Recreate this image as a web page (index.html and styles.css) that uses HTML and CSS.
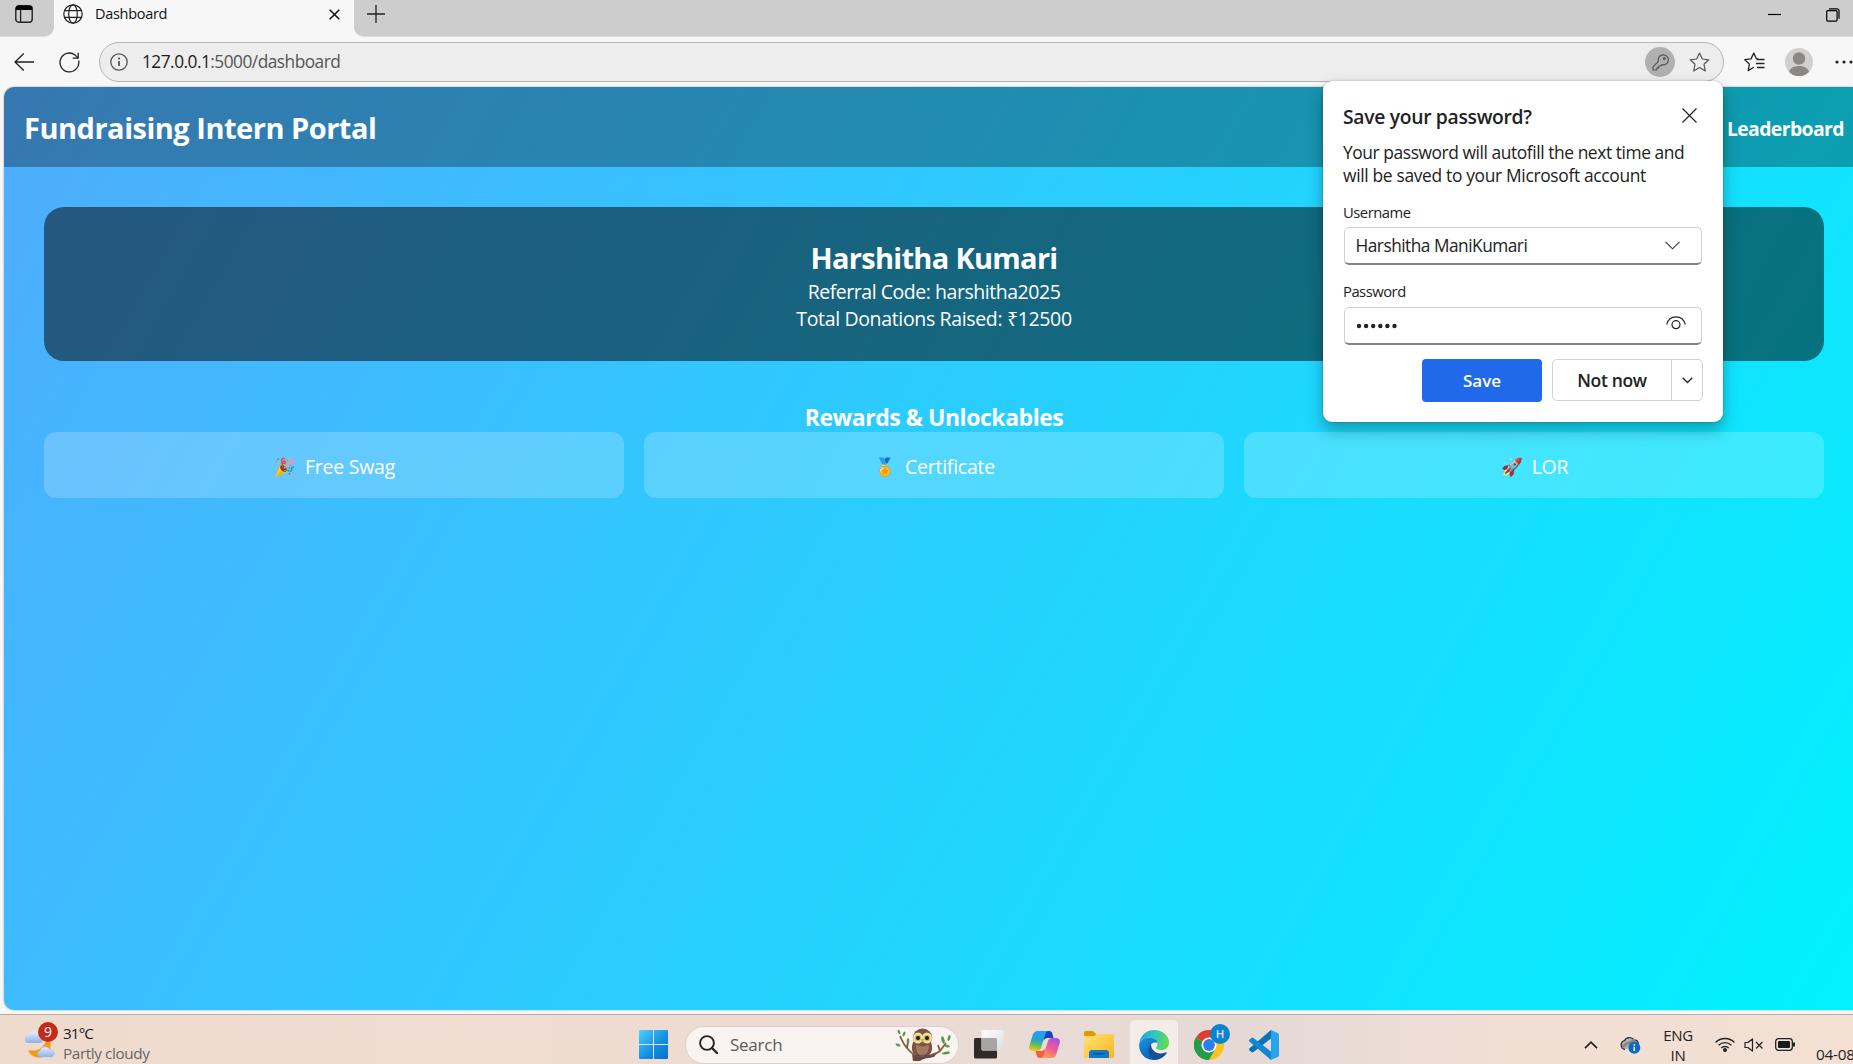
FILE: index.html
```html
<!DOCTYPE html>
<html lang="en">
<head>
<meta charset="utf-8">
<title>Dashboard</title>
<link rel="stylesheet" href="styles.css">
</head>
<body>
<div class="tabstrip">
  <div class="strip-left">
    <svg width="18" height="18" viewBox="0 0 18 18"><rect x=".8" y=".8" width="16.4" height="16.4" rx="3" fill="none" stroke="#222" stroke-width="1.4"/><path d="M.8 5V3.5A2.8 2.8 0 0 1 3.6.7h10.8a2.8 2.8 0 0 1 2.8 2.8V5z" fill="#000"/><path d="M5.6 5v12" stroke="#222" stroke-width="1.3"/></svg>
  </div>
  <div class="tab">
    <svg class="globe" width="20" height="20" viewBox="0 0 20 20" fill="none" stroke="#222" stroke-width="1.2"><circle cx="10" cy="10" r="9.2"/><ellipse cx="10" cy="10" rx="4.3" ry="9.2"/><path d="M1.6 6.6h16.8M1.6 13.4h16.8"/></svg>
    <span class="tab-title">Dashboard</span>
    <svg class="tab-close" width="11" height="11" viewBox="0 0 11 11" stroke="#111" stroke-width="1.5"><path d="M.7.7l9.6 9.6M10.3.7L.7 10.3"/></svg>
  </div>
  <div class="strip-right">
    <svg class="new-tab" width="18" height="18" viewBox="0 0 18 18" stroke="#222" stroke-width="1.3"><path d="M9 0v18M0 9h18"/></svg>
    <svg class="minimize" width="13" height="13" viewBox="0 0 13 13"><path d="M0 6.5h13" stroke="#000" stroke-width="1.2"/></svg>
    <svg class="restore" width="14" height="14" viewBox="0 0 14 14" fill="none" stroke="#000" stroke-width="1.2"><rect x=".7" y="2.7" width="10.4" height="10.4" rx="1"/><path d="M3 .8h8a2 2 0 0 1 2 2v8"/></svg>
  </div>
</div>

<div class="toolbar">
  <svg class="back" width="20" height="18" viewBox="0 0 20 18" fill="none" stroke="#222" stroke-width="1.3"><path d="M20 9H1M9.8.5L1 9l8.8 8.5"/></svg>
  <svg class="reload" width="21" height="21" viewBox="0 0 21 21" fill="none" stroke="#222" stroke-width="1.3"><path d="M19.6 8.5A9.4 9.4 0 1 1 16 2.9L19 6"/><path d="M19.2.8v5.4h-5.5"/></svg>
  <div class="address">
    <svg class="info" width="18" height="18" viewBox="0 0 18 18"><circle cx="9" cy="9" r="8.2" fill="none" stroke="#555" stroke-width="1.3"/><path d="M9 8v5" stroke="#444" stroke-width="1.6"/><circle cx="9" cy="5.6" r="1" fill="#444"/></svg>
    <span class="url"><b>127.0.0.1</b>:5000/dashboard</span>
    <span class="key"><svg width="17" height="17" viewBox="0 0 17 17" fill="none" stroke="#555" stroke-width="1.2"><path d="M11.2.8a5 5 0 1 1-1.3 9.800L8.500 12H6.800v1.800H5v1.400L4.200 16H1v-3.100l5.500-5.600A5 5 0 0 1 11.200.8z" stroke-linejoin="round"/><circle cx="12.300" cy="4.600" r=".9"/></svg></span>
    <svg class="star" width="21" height="20" viewBox="0 0 21 20" fill="none" stroke="#555" stroke-width="1.2" stroke-linejoin="round"><path d="M10.500 1l2.800 6 6.500.8-4.800 4.500 1.300 6.600-5.800-3.300-5.800 3.300L6 12.300 1.200 7.800 7.700 7z"/></svg>
  </div>
  <svg class="favs" width="21" height="20" viewBox="0 0 21 20" fill="none" stroke="#222" stroke-width="1.300" stroke-linejoin="round"><path d="M14 7l-1.600-.2L9.800 1 7 6.900.8 7.700l4.600 4.400-1.200 6.500 5.600-3.300"/><path d="M13 7.500h7.500M12 11.500h8.500M13 15.500h7.500"/></svg>
  <svg class="avatar" width="28" height="28" viewBox="0 0 28 28"><circle cx="14" cy="14" r="14" fill="#d2d0ce"/><circle cx="14" cy="10.500" r="6.200" fill="#8a8886"/><path d="M4 24c1-4 5-6 10-6s9 2 10 6a14 14 0 0 1-20 0z" fill="#8a8886"/></svg>
  <svg class="more" width="18" height="4" viewBox="0 0 18 4" fill="#222"><circle cx="2" cy="2" r="1.600"/><circle cx="9" cy="2" r="1.600"/><circle cx="16" cy="2" r="1.600"/></svg>
</div>

<div class="viewport">
  <div class="page">
    <header class="navbar">
      <h1>Fundraising Intern Portal</h1>
      <a class="nav-link">Leaderboard</a>
    </header>
    <main>
      <section class="profile">
        <h2>Harshitha Kumari</h2>
        <p class="referral">Referral Code: harshitha2025</p>
        <p class="total">Total Donations Raised: ₹12500</p>
      </section>
      <h3>Rewards &amp; Unlockables</h3>
      <div class="rewards">
        <div class="reward"><span class="emoji">🎉</span>Free Swag</div>
        <div class="reward"><span class="emoji">🏅</span>Certificate</div>
        <div class="reward"><span class="emoji">🚀</span>LOR</div>
      </div>
    </main>
  </div>
</div>

<div class="taskbar">
  <div class="weather">
    <div class="weather-icon">
      <svg width="32" height="34" viewBox="0 0 32 34"><defs><linearGradient id="cl" x1="0" y1="0" x2="0" y2="1"><stop offset="0" stop-color="#e6efff"/><stop offset="1" stop-color="#8eb0ea"/></linearGradient></defs><path d="M26 16c2 6 0 14-7 16-6 2-13-1-15-7 8 2 15-1 18-9z" fill="#f39a1b"/><path d="M4 18a3.800 3.800 0 0 1 0-7.500 6 6 0 0 1 11-1c5 0 6 8 1 8.500z" fill="url(#cl)"/><path d="M16 32a3.500 3.500 0 0 1 0-6.500 5.500 5.500 0 0 1 10-1c5 0 6 7 1 7.500z" fill="url(#cl)" stroke="#9dbaf0" stroke-width=".5"/></svg>
      <span class="count">9</span>
    </div>
    <div class="weather-text"><div class="temp">31°C</div><div class="cond">Partly cloudy</div></div>
  </div>
  <svg class="start" width="29" height="29" viewBox="0 0 29 29"><defs><linearGradient id="w" x1="0" y1="0" x2="1" y2="1"><stop offset="0" stop-color="#4fd0ff"/><stop offset=".55" stop-color="#1492e2"/><stop offset="1" stop-color="#0070d0"/></linearGradient></defs><path d="M1 0h13v14H0V1a1 1 0 0 1 1-1zM15 0h13a1 1 0 0 1 1 1v13H15zM0 15h14v14H1a1 1 0 0 1-1-1zM15 15h14v13a1 1 0 0 1-1 1H15z" fill="url(#w)"/></svg>
  <div class="search">
    <svg class="lens" width="19" height="19" viewBox="0 0 19 19" fill="none" stroke="#222"><circle cx="8" cy="8" r="6.900" stroke-width="1.900"/><path d="M13 13l5 5" stroke-width="2.300" stroke-linecap="round"/></svg>
    <span>Search</span>
    <svg class="owl" width="56" height="33" viewBox="0 0 56 33">
      <path d="M5 8c2 4 3 8 7 12 3 4 7 7 12 9M18 32c8-5 20-3 27-9l6-8M12 20l1-6M45 23l-2-6" fill="none" stroke="#8a5a3c" stroke-width="1.800"/>
      <path d="M17 26c3 3 18 4 25-1l-3 4c-5 1-10 1-14 4h-7z" fill="#704630"/>
      <g fill="#4f9a4c"><ellipse cx="4" cy="4" rx="1.200" ry="2.300" transform="rotate(-30 4 4)"/><ellipse cx="9" cy="6" rx="1.200" ry="2.600" transform="rotate(25 9 6)"/><ellipse cx="3" cy="17" rx="2.600" ry="1.200" transform="rotate(20 3 17)"/><ellipse cx="13" cy="13" rx="1.300" ry="3"/><ellipse cx="54" cy="10" rx="1.300" ry="3" transform="rotate(15 54 10)"/><ellipse cx="48" cy="12" rx="1.500" ry="3.800" transform="rotate(-15 48 12)"/><ellipse cx="52" cy="18" rx="2.800" ry="1.300" transform="rotate(15 52 18)"/><ellipse cx="51" cy="25" rx="4" ry="1.300" transform="rotate(-12 51 25)"/></g>
      <path d="M18 14c-3 8 0 15 9 15s12-7 9-15z" fill="#7b5342"/><path d="M21 17c0 7 2 10 6 10s7-3 7-10z" fill="#a37a60"/>
      <ellipse cx="27.500" cy="9.500" rx="9.700" ry="9" fill="#7a5548"/><ellipse cx="23" cy="10" rx="5" ry="5.500" fill="#f1dca4"/><ellipse cx="32" cy="10" rx="5" ry="5.500" fill="#f1dca4"/><circle cx="23" cy="10" r="3" fill="#d9b327"/><circle cx="32" cy="10" r="3" fill="#d9b327"/><circle cx="23" cy="10" r="2" fill="#172025"/><circle cx="32" cy="10" r="2" fill="#172025"/><path d="M26 11h3l-1.500 4z" fill="#c9a27a"/><path d="M21 28h4M30 28h4" stroke="#4a4590" stroke-width="2"/>
    </svg>
  </div>
  <svg class="taskview" width="30" height="29" viewBox="0 0 30 29"><defs><linearGradient id="tv" x1="0" y1="0" x2="1" y2="1"><stop offset="0" stop-color="#fff"/><stop offset="1" stop-color="#dcdcdc"/></linearGradient></defs><rect x="0" y="8" width="23" height="20.500" rx="1.500" fill="#2d2c2b"/><rect x="7.500" y="0" width="22.500" height="20.500" rx="1.500" fill="url(#tv)"/><path d="M7.500 8H21.500a1.500 1.500 0 0 1 1.500 1.500V20.500H9a1.500 1.500 0 0 1-1.500-1.500z" fill="#a6a5a4"/></svg>
  <svg class="copilot" width="31" height="29" viewBox="0 0 31 29"><defs><linearGradient id="c1" x1=".5" y1="0" x2=".3" y2="1"><stop offset="0" stop-color="#2a9df4"/><stop offset=".45" stop-color="#1ba7c9"/><stop offset=".75" stop-color="#7cc13f"/><stop offset="1" stop-color="#f6c90e"/></linearGradient><linearGradient id="c2" x1=".8" y1="0" x2=".3" y2="1"><stop offset="0" stop-color="#a54fe8"/><stop offset=".5" stop-color="#ef5b92"/><stop offset="1" stop-color="#ff9d5c"/></linearGradient></defs><path d="M15 1h5c2 0 3 1 3.500 3l1 4h-6c-2 0-3 1-4 3z" fill="#1743c4"/><path d="M16 28h-5c-2 0-3-1-3.500-3l-1-4h6c2 0 3-1 4-3z" fill="#f5603c"/><path d="M9 1h11c-2 0-3 1-3.700 3l-4 13c-.8 3-2.300 4-4.300 4H4c-3 0-4.500-2-3.700-5L3.700 5C4.500 2.500 6 1 9 1z" fill="url(#c1)"/><path d="M22 28H11c2 0 3-1 3.700-3l4-13c.8-3 2.300-4 4.300-4h4c3 0 4.500 2 3.700 5l-3.400 11c-.8 2.500-2.300 4-5.300 4z" fill="url(#c2)"/></svg>
  <svg class="folder" width="30" height="27" viewBox="0 0 30 27"><defs><linearGradient id="fo" x1="0" y1="0" x2="1" y2="1"><stop offset="0" stop-color="#ffe07a"/><stop offset="1" stop-color="#fbb91a"/></linearGradient></defs><path d="M0 2a2 2 0 0 1 2-2h7l4 4v4H0z" fill="#dc9a0a"/><path d="M0 5h10l3-2h15.500A1.500 1.500 0 0 1 30 4.500V25.500A1.500 1.500 0 0 1 28.500 27h-27A1.500 1.500 0 0 1 0 25.500z" fill="url(#fo)"/><path d="M5 27v-5a3 3 0 0 1 3-3h14a3 3 0 0 1 3 3v5z" fill="#0f78c8"/><path d="M9 22.700h12" stroke="#07477e" stroke-width="1.200"/></svg>
  <div class="edge">
    <svg width="30" height="30" viewBox="0 0 30 30"><defs><linearGradient id="e1" x1="0" y1=".3" x2="1" y2=".5"><stop offset="0" stop-color="#1da6dc"/><stop offset=".5" stop-color="#35c6bb"/><stop offset="1" stop-color="#62dc4d"/></linearGradient><linearGradient id="e2" x1="0" y1="0" x2=".5" y2="1"><stop offset="0" stop-color="#1896dd"/><stop offset="1" stop-color="#0a5fb8"/></linearGradient></defs><path d="M.3 13.500C1 6 7 0 15 0c9 0 15 6 15 12.500 0 5-3.500 7.500-7.500 7.500-3.500 0-5.500-1-5.500-2 0-.8 1.500-1.500 1.500-4 0-4-4-6.500-8.500-6.500C6 7.500 2 9.500.3 13.500z" fill="url(#e1)"/><path d="M.2 14C2 9.500 6 7.500 10 7.500c4.500 0 8.500 2.500 8.500 6 0-1-4.500-2-6.500 1-3 5 2 13 9 12.500-2 2-4 3-7 3C5 29.500-.6 22 .2 14z" fill="url(#e2)"/><path d="M12 14.500c-4 1.500-4 11 3 15.500 6 0 10-3 12.500-6.500.6-1-.2-1.600-1.200-1.100-7.300 3.100-14.300-1.400-14.300-7.900z" fill="#10519b"/></svg>
  </div>
  <div class="chrome">
    <svg width="30" height="30" viewBox="0 0 30 30"><path d="M15 15L2 7.500A15 15 0 0 1 28 7.500z" fill="#e33b2e"/><path d="M15 15L2 7.500A15 15 0 0 0 15 30z" fill="#269c49"/><path d="M28 7.500H15V15l6.500 3.700L15 30A15 15 0 0 0 28 7.500z" fill="#fcc31e"/><path d="M2 7.500l6.500 11.200L15 22l6.500-3.300L15 30A15 15 0 0 1 2 7.500z" fill="#269c49"/><circle cx="15" cy="15" r="7.500" fill="#fff"/><circle cx="15" cy="15" r="5.900" fill="#2f7de9"/></svg>
    <span class="chrome-badge">H</span>
  </div>
  <svg class="vscode" width="30" height="30" viewBox="0 0 30 30"><path d="M22 0v8.500L4.500 22c-.7.500-1.500.5-2.200 0L.6 20.500c-.7-.7-.7-1.700 0-2.300z" fill="#0a72b8"/><path d="M22 30v-8.500L4.500 8c-.7-.5-1.500-.5-2.200 0L.6 9.500c-.7.700-.7 1.700 0 2.300z" fill="#1089d3"/><path d="M22 0l6.800 3c.8.400 1.200 1 1.200 2v20c0 1-.4 1.600-1.200 2L22 30z" fill="#26a4f0"/></svg>
  <svg class="tray-chevron" width="14" height="8" viewBox="0 0 14 8" fill="none" stroke="#222" stroke-width="1.700"><path d="M1 7.200l6-6 6 6"/></svg>
  <svg class="onedrive" width="21" height="18" viewBox="0 0 21 18"><path d="M5 13.500a4.500 4.500 0 0 1-.5-8.800C6 1 12 .3 14 4c3 0 4.500 2 4.500 5" fill="#b5b5b5" stroke="#333" stroke-width="1.300"/><path d="M3 11C6 6 10 8 15 4" stroke="#888" stroke-width="3" fill="none"/><circle cx="14.300" cy="11.700" r="6" fill="#0b6bc4"/><path d="M14.300 10.700v4.300M14.300 8.300v1.400" stroke="#fff" stroke-width="1.400"/></svg>
  <div class="lang"><span>ENG</span><span>IN</span></div>
  <svg class="wifi" width="20" height="15" viewBox="0 0 20 15" fill="none" stroke="#222" stroke-width="1.400"><path d="M.6 5.400a13.300 13.300 0 0 1 18.800 0M3.600 8.300a9 9 0 0 1 12.800 0M6.300 11a5.200 5.200 0 0 1 7.400 0"/><circle cx="10" cy="13" r="1.300" fill="#222"/></svg>
  <svg class="speaker" width="20" height="14" viewBox="0 0 20 14" fill="none" stroke="#222" stroke-width="1.200"><path d="M1 4.500h2.800L8.500.9v12.200L3.800 9.500H1z" stroke-linejoin="round"/><path d="M12 4l6.500 6.500M18.500 4L12 10.500"/></svg>
  <svg class="battery" width="21" height="13" viewBox="0 0 21 13"><rect x=".7" y=".7" width="16.600" height="11.600" rx="2.800" fill="none" stroke="#222" stroke-width="1.300"/><rect x="3" y="3" width="12" height="7" rx="1" fill="#1a1a1a"/><path d="M18.800 4.500v4" stroke="#222" stroke-width="2.400"/></svg>
  <span class="date">04-08-2025</span>
</div>

<div class="dialog">
  <div class="dialog-head"><span>Save your password?</span>
    <svg width="15" height="15" viewBox="0 0 15 15" stroke="#222" stroke-width="1.200"><path d="M.5.500l14 14M14.500.5l-14 14"/></svg></div>
  <p class="line-a">Your password will autofill the next time and</p>
  <p class="line-b">will be saved to your Microsoft account</p>
  <div class="label">Username</div>
  <div class="field"><span>Harshitha ManiKumari</span>
    <svg class="drop" width="15" height="9" viewBox="0 0 15 9" fill="none" stroke="#333" stroke-width="1.100"><path d="M.5.800l7 7 7-7"/></svg></div>
  <div class="label second">Password</div>
  <div class="field"><svg width="42" height="6" viewBox="0 0 42 6" fill="#222"><circle cx="3" cy="3" r="2.200"/><circle cx="10.100" cy="3" r="2.200"/><circle cx="17.200" cy="3" r="2.200"/><circle cx="24.300" cy="3" r="2.200"/><circle cx="31.400" cy="3" r="2.200"/><circle cx="38.500" cy="3" r="2.200"/></svg>
    <svg class="eye" width="20" height="14" viewBox="0 0 20 14" fill="none" stroke="#222" stroke-width="1.200"><path d="M.7 8.500C2 3.500 5.500.8 10 .8s8 2.700 9.300 7.700"/><circle cx="10" cy="8.700" r="4"/></svg></div>
  <div class="actions">
    <div class="save">Save</div>
    <div class="split"><span class="not-now">Not now</span><span class="split-arrow"><svg width="11" height="7" viewBox="0 0 11 7" fill="none" stroke="#222" stroke-width="1.300"><path d="M.7.800l4.800 4.700L10.300.8"/></svg></span></div>
  </div>
</div>
</body>
</html>
```
FILE: styles.css
```css
* { box-sizing: border-box; margin: 0; padding: 0; }
body {
  width: 1853px; height: 1064px; overflow: hidden; position: relative;
  font-family: "Open Sans", "Noto Sans", sans-serif;
  background: #f7f7f7; color: #222; white-space: nowrap;
}
svg { display: block; flex: none; }

/* Tab strip */
.tabstrip { display: flex; height: 37px; background: #f7f7f7; }
.strip-left { width: 54px; padding: 5px 0 0 15px; background: #cdcdcd; border-bottom: 1px solid #dcdcdc; border-bottom-right-radius: 10px; }
.tab { display: flex; width: 300px; padding-left: 9px; }
.globe { margin-top: 4px; }
.tab-title { margin-left: 12px; width: 234px; font-size: 14.5px; letter-spacing: -.3px; line-height: 27px; color: #111; }
.tab-close { margin-top: 9px; }
.strip-right { display: flex; flex: 1; padding-left: 13px; background: #cdcdcd; border-bottom: 1px solid #dcdcdc; border-bottom-left-radius: 10px; }
.new-tab { margin-top: 5px; }
.minimize { margin: 8px 0 0 auto; }
.restore { margin: 8px 13px 0 45px; }

/* Address bar row */
.toolbar { display: flex; align-items: center; height: 50px; padding-left: 14px; }
.reload { margin-left: 25px; }
.address { display: flex; align-items: center; width: 1625px; height: 40px; margin-left: 19px; padding-left: 10px; background: #ededed; border: 1px solid #b5b5b5; border-radius: 20px; }
.url { margin-left: 14px; font-size: 17.3px; letter-spacing: -.51px; line-height: 38px; color: #555; }
.url b { font-weight: 400; color: #1c1c1c; }
.key { display: flex; align-items: center; justify-content: center; width: 30px; height: 30px; margin-left: auto; background: #b0b0b0; border-radius: 50%; }
.star { margin: 0 13px 0 14px; }
.favs { margin-left: 20px; }
.avatar { margin-left: 20px; }
.more { margin-left: 22px; }

/* Web page */
.viewport { height: 923px; margin-left: 4px; overflow: hidden; border-radius: 10px 0 0 10px; box-shadow: 0 0 2px #999; }
.page { width: 1860px; height: 923px; color: #fff; background: linear-gradient(120deg, #4facfe, #00f2fe); }
.navbar { display: flex; align-items: center; justify-content: space-between; height: 80px; padding: 1px 20px 0 20px; background: rgba(0, 0, 0, .3); }
h1 { font-size: 29px; letter-spacing: -.49px; }
.nav-link { font-size: 19.4px; font-weight: 700; letter-spacing: -.6px; padding-top: 1px; }
main { padding: 40px; text-align: center; }
.profile { height: 154px; padding-top: 30px; background: rgba(0, 0, 0, .5); border-radius: 20px; }
h2 { font-size: 29px; line-height: 41px; letter-spacing: -.7px; }
.profile p { font-size: 19.5px; line-height: 27px; }
.referral { letter-spacing: -.46px; }
.total { letter-spacing: -.35px; }
h3 { margin-top: 41px; font-size: 23px; line-height: 30px; letter-spacing: -.46px; }
.rewards { display: grid; grid-template-columns: repeat(3, 1fr); gap: 20px; }
.reward { display: flex; align-items: center; justify-content: center; height: 66px; padding: 2px 0 0 1px; font-size: 19.5px; letter-spacing: -.25px; background: rgba(255, 255, 255, .2); border-radius: 12px; }
.emoji { width: 31px; font-size: 17.5px; text-align: left; letter-spacing: 0; }

/* Taskbar */
.taskbar { display: flex; align-items: center; width: 1960px; height: 60px; margin-top: 4px; border-top: 1px solid #b9aba6; background: linear-gradient(90deg, #efdbce, #f0dcd0 26%, #ebdbd4 47%, #e5d9d6 64%, #f1dfd4 77%, #f4e0d3); }
.taskbar > * { flex: none; }
.weather { display: flex; width: 639px; margin-top: -4px; padding-left: 24px; }
.weather-icon { position: relative; width: 39px; padding-top: 2px; }
.count { position: absolute; left: 14px; top: -1px; width: 20px; height: 20px; border-radius: 50%; background: #c42b1c; color: #fff; font-size: 14px; line-height: 20px; text-align: center; }
.temp, .cond { font-size: 15.3px; line-height: 20px; letter-spacing: -.4px; }
.temp { letter-spacing: -.9px; }
.cond { color: #666; }
.search { display: flex; align-items: center; width: 274px; height: 38px; margin-left: 17px; padding-left: 13px; background: #f9f4f1; border: 1px solid #e0d0c9; border-radius: 19px; font-size: 17px; letter-spacing: -.25px; color: #5c5a59; }
.search span { flex: none; width: 165px; margin-left: 12px; }
.taskview { margin-left: 15px; }
.copilot { margin-left: 25px; }
.folder { margin-left: 24px; }
.edge { display: flex; align-items: center; justify-content: center; width: 48px; height: 50px; margin-left: 16px; background: #f5ece9; border-radius: 5px; }
.chrome { position: relative; margin-left: 16px; }
.chrome-badge { position: absolute; left: 16px; top: -6px; width: 20px; height: 20px; border-radius: 50%; background: #0d83cb; color: #cfe8fa; font-size: 11.5px; font-weight: 600; line-height: 20px; text-align: center; }
.vscode { margin-left: 25px; }
.tray-chevron { margin-left: 305px; }
.onedrive { margin-left: 22px; }
.lang { display: flex; flex-direction: column; align-items: center; width: 30px; margin-left: 22px; font-size: 15px; line-height: 20px; letter-spacing: -.3px; }
.wifi { margin-left: 22px; }
.speaker { margin-left: 9px; }
.battery { margin-left: 11px; }
.date { margin: 18px 0 0 20px; font-size: 15.3px; line-height: 20px; letter-spacing: -.2px; }

/* Save password dialog */
.dialog { position: absolute; left: 1323px; top: 81px; width: 400px; height: 341px; padding: 24px 20px 0 20px; background: #fff; border-radius: 9px; box-shadow: 0 0 2px rgba(0, 0, 0, .3), 0 8px 16px rgba(0, 0, 0, .3); }
.dialog-head { display: flex; justify-content: space-between; align-items: center; height: 24px; padding-right: 6px; font-size: 19.3px; font-weight: 600; letter-spacing: -.3px; line-height: 24px; }
.dialog-head svg { margin-top: -4px; }
.dialog p { font-size: 17.4px; line-height: 23px; }
.line-a { margin-top: 12px; letter-spacing: -.43px; }
.line-b { letter-spacing: -.33px; }
.label { margin: 15px 0 5px; font-size: 14.8px; line-height: 20px; letter-spacing: -.5px; }
.label.second { margin-top: 16px; margin-bottom: 6px; }
.field { display: flex; align-items: center; justify-content: space-between; height: 38px; margin: 0 1px; padding: 0 15px 0 10.5px; border: 1px solid #d1d1d1; border-bottom: 2px solid #858585; border-radius: 5px; font-size: 17.3px; letter-spacing: -.5px; }
.drop { margin-right: 6px; }
.eye { margin-top: -6px; }
.actions { display: flex; justify-content: flex-end; gap: 10px; margin-top: 14px; }
.save { width: 120px; height: 43px; background: #2169eb; border-radius: 4px; color: #fff; font-size: 17px; font-weight: 600; line-height: 43px; text-align: center; }
.split { display: flex; width: 151px; height: 42px; border: 1px solid #d1d1d1; border-radius: 5px; }
.not-now { width: 119px; border-right: 1px solid #d1d1d1; font-size: 17.5px; font-weight: 600; letter-spacing: -.35px; line-height: 40px; text-align: center; }
.split-arrow { display: flex; flex: 1; align-items: center; justify-content: center; }
```
